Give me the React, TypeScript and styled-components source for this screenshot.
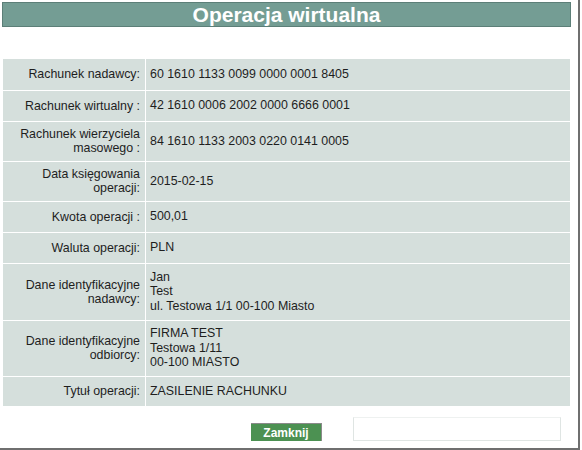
import styled, { createGlobalStyle } from "styled-components";

const GlobalStyle = createGlobalStyle`
  html, body {
    margin: 0;
    padding: 0;
    background: #ffffff;
  }
  body {
    font-family: "Liberation Sans", Arial, sans-serif;
  }
`;

const rows: { label: string[]; value: string[]; height: number }[] = [
  { label: ["Rachunek nadawcy:"], value: ["60 1610 1133 0099 0000 0001 8405"], height: 31 },
  { label: ["Rachunek wirtualny :"], value: ["42 1610 0006 2002 0000 6666 0001"], height: 31 },
  { label: ["Rachunek wierzyciela", "masowego :"], value: ["84 1610 1133 2003 0220 0141 0005"], height: 40 },
  { label: ["Data księgowania", "operacji:"], value: ["2015-02-15"], height: 40 },
  { label: ["Kwota operacji :"], value: ["500,01"], height: 31 },
  { label: ["Waluta operacji:"], value: ["PLN"], height: 31 },
  {
    label: ["Dane identyfikacyjne", "nadawcy:"],
    value: ["Jan", "Test", "ul. Testowa 1/1 00-100 Miasto"],
    height: 57,
  },
  {
    label: ["Dane identyfikacyjne", "odbiorcy:"],
    value: ["FIRMA TEST", "Testowa 1/11", "00-100 MIASTO"],
    height: 56,
  },
  { label: ["Tytuł operacji:"], value: ["ZASILENIE RACHUNKU"], height: 30 },
];

function App() {
  return (
    <>
      <GlobalStyle />
      <Frame>
        <Title>Operacja wirtualna</Title>
        <DetailsTable>
          <tbody>
            {rows.map((row, i) => (
              <Row key={i} $height={row.height} $last={i === rows.length - 1}>
                <LabelCell>
                  {row.label.map((l, j) => (
                    <div key={j}>{l}</div>
                  ))}
                </LabelCell>
                <ValueCell>
                  {row.value.map((v, j) => (
                    <div key={j}>{v}</div>
                  ))}
                </ValueCell>
              </Row>
            ))}
          </tbody>
        </DetailsTable>
        <Footer>
          <CloseButton>Zamknij</CloseButton>
          <EmptyBox />
        </Footer>
      </Frame>
    </>
  );
}

const Frame = styled.div`
  width: 580px;
  height: 450px;
  box-sizing: border-box;
  padding: 2px 0 0 2px;
  border-right: 2px solid #6f6f6f;
  border-bottom: 2px solid #6f6f6f;
`;

const Title = styled.div`
  width: 569px;
  height: 25px;
  box-sizing: border-box;
  background: #749d94;
  border: 1px solid #5c7f78;
  color: #ffffff;
  font-weight: bold;
  font-size: 21px;
  line-height: 23px;
  text-align: center;
`;

const DetailsTable = styled.table`
  margin: 32px 0 0 1px;
  width: 567px;
  border-collapse: collapse;
  border-spacing: 0;
  background: #d5dfdc;
  font-size: 12.4px;
  color: #1e1e1e;
`;

const Row = styled.tr<{ $height: number; $last: boolean }>`
  height: ${(p) => p.$height}px;
  border-bottom: ${(p) => (p.$last ? "none" : "1px solid #ffffff")};
`;

const LabelCell = styled.td`
  width: 137px;
  padding: 0 5px 0 0;
  text-align: right;
  vertical-align: middle;
  line-height: 14px;
  border-right: 1px solid #ffffff;
`;

const ValueCell = styled.td`
  padding: 0 0 0 4px;
  text-align: left;
  vertical-align: middle;
  line-height: 14.5px;
`;

const Footer = styled.div`
  display: flex;
  align-items: flex-start;
  padding: 11px 0 0 249px;
`;

const CloseButton = styled.button`
  margin-top: 6px;
  width: 71px;
  height: 18px;
  padding: 0;
  background: #4c9152;
  color: #ffffff;
  font-family: "Liberation Sans", Arial, sans-serif;
  font-weight: bold;
  font-size: 12px;
  border: none;
  border-top: 1px solid #8a8a8a;
  border-right: 1px solid #8a8a8a;
  cursor: pointer;
`;

const EmptyBox = styled.div`
  margin-left: 31px;
  width: 206px;
  height: 22px;
  border: 1px solid #dfe5e3;
  border-top-color: #eef1f0;
  background: #ffffff;
`;

export default App;
